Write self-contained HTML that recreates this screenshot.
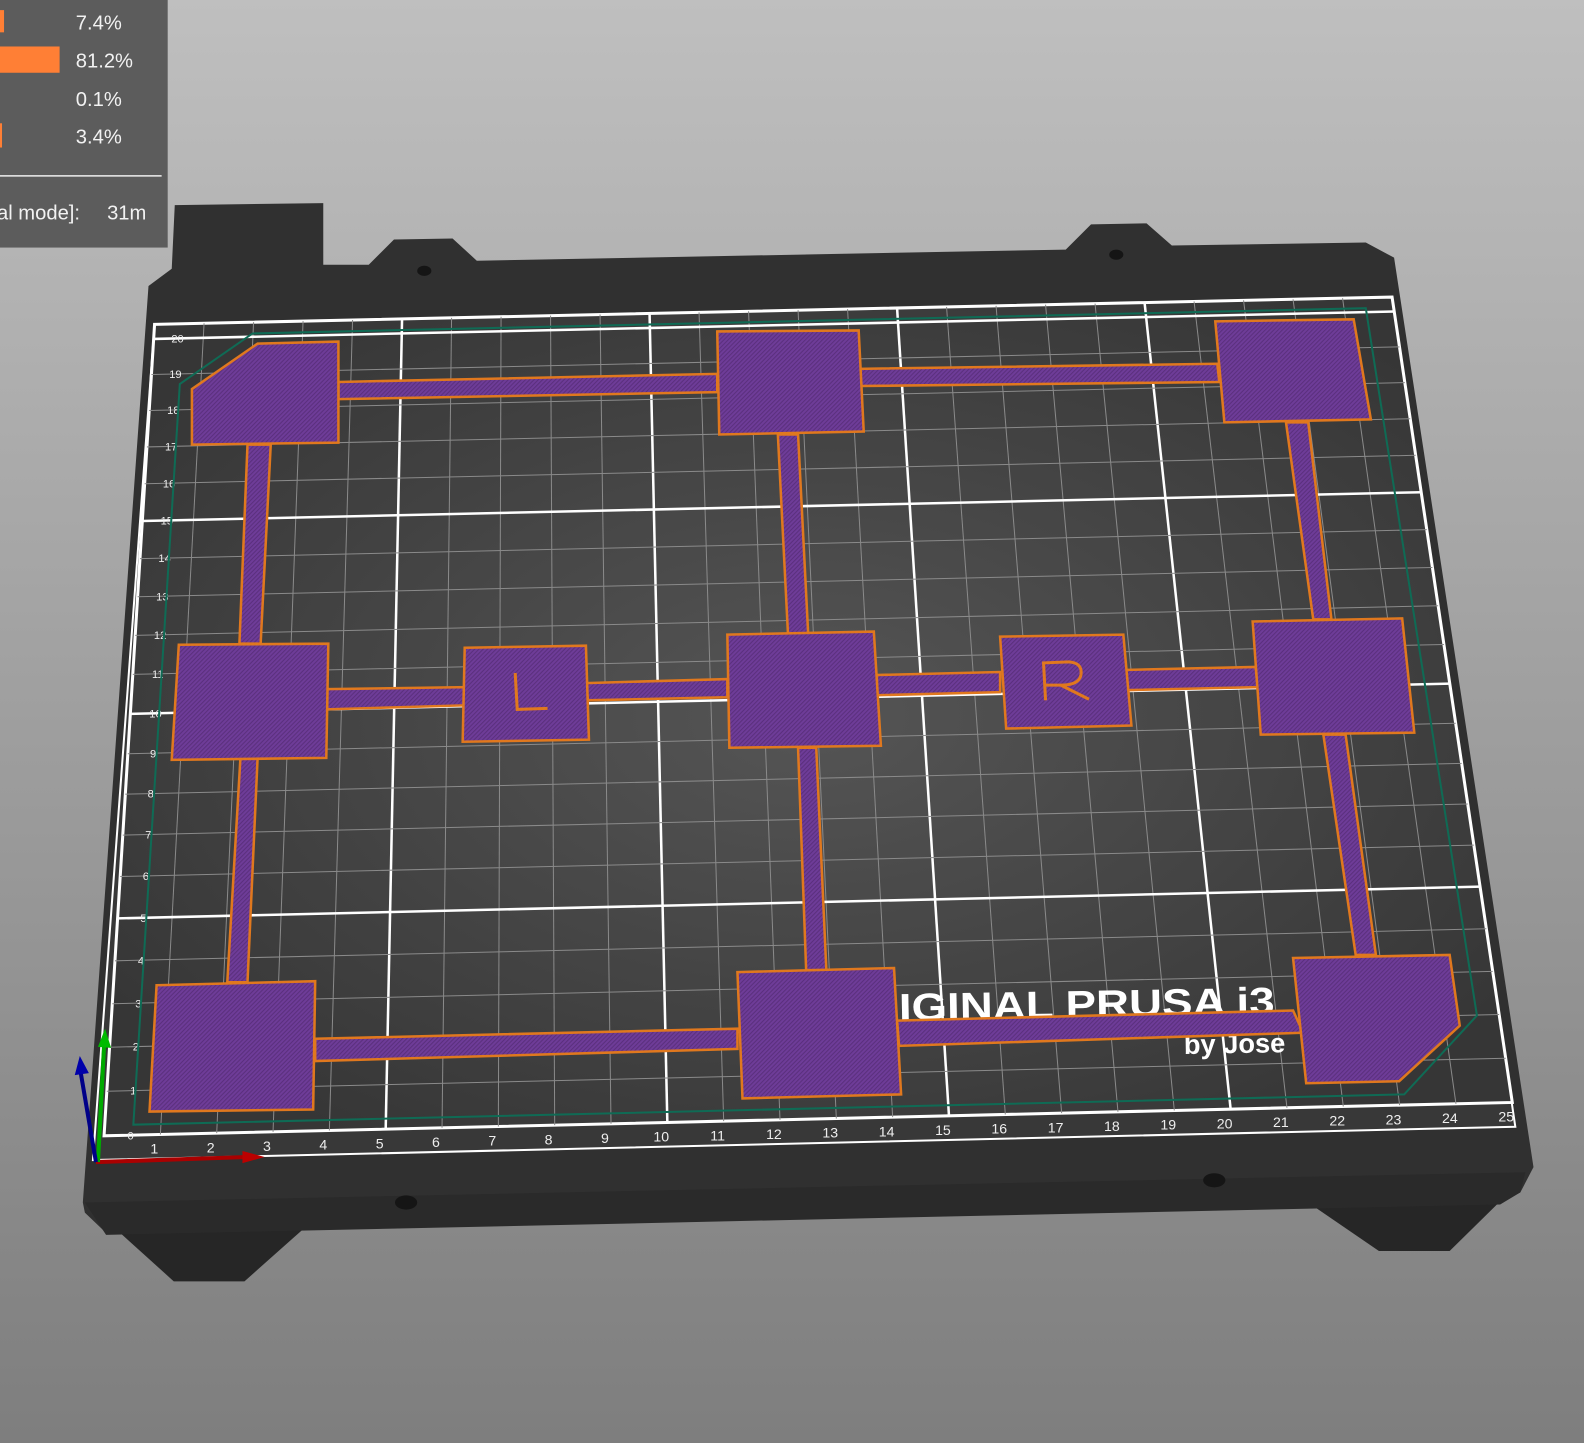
<!DOCTYPE html>
<html><head><meta charset="utf-8"><style>
html,body{margin:0;padding:0;width:1584px;height:1443px;overflow:hidden;background:#a0a0a0}
svg{display:block}
text{font-family:"Liberation Sans",sans-serif}
</style></head><body>
<svg id="s" width="1584" height="1443" viewBox="0 0 1568 1428" preserveAspectRatio="none" xmlns="http://www.w3.org/2000/svg">
<defs>
<linearGradient id="bg" x1="0" y1="0" x2="0" y2="1"><stop offset="0" stop-color="#bfbfbf"/><stop offset="1" stop-color="#7e7e7e"/></linearGradient>
<radialGradient id="pl" cx="0.5" cy="0.5" r="0.6"><stop offset="0" stop-color="#555"/><stop offset="1" stop-color="#363636"/></radialGradient>
<pattern id="hatch" width="3" height="3" patternUnits="userSpaceOnUse" patternTransform="rotate(45)"><rect width="3" height="3" fill="#6e3c98"/><rect width="1" height="3" fill="#5a2f7c"/></pattern>
</defs>
<rect width="1568" height="1428" fill="url(#bg)"/>
<polygon points="110,1212 172,1268 242,1268 305,1212" fill="#262626"/>
<polygon points="1292,1188 1365,1238 1435,1238 1492,1182" fill="#262626"/>
<polygon points="147,283 170,266 173,203 320,201 320,262 365,262 390,237 448,236 472,258 1055,247 1080,222 1135,221 1160,243 1352,240 1380,255 1518,1155 1505,1180 1485,1190 105,1220 84,1200 82,1190" fill="#303030"/>
<polygon points="84,1190 1510,1160 1505,1180 1485,1192 105,1222" fill="#2a2a2a"/>
<ellipse cx="420" cy="268" rx="7" ry="5" fill="#151515"/>
<ellipse cx="1105" cy="252" rx="7" ry="5" fill="#151515"/>
<ellipse cx="402" cy="1190" rx="11" ry="7" fill="#151515"/>
<ellipse cx="1202" cy="1168" rx="11" ry="7" fill="#151515"/>
<polygon points="153,321 1378,294 1500,1115 92,1148" fill="#383838" stroke="#fff" stroke-width="2"/>
<polygon points="153,321 1378,294 1497,1091 103,1124" fill="url(#pl)" stroke="#fff" stroke-width="3"/>
<g id="grid"></g>
<g id="labels" fill="#eee" font-size="13"></g>
<text x="890" y="1010" fill="#fff" font-size="38" font-weight="bold" textLength="372" lengthAdjust="spacingAndGlyphs" transform="rotate(-1 890 1010)">IGINAL PRUSA i3</text>
<text x="1172" y="1043" fill="#fff" font-size="27" font-weight="bold" transform="rotate(-1 1172 1043)">by Jose</text>
<polygon points="250,330 1352,305 1462,1005 1390,1083 132,1113 178,380" fill="none" stroke="#0f6b55" stroke-width="2"/>
<g fill="url(#hatch)" stroke="#e0781e" stroke-width="2.5">
<polygon points="335,378 710,370 710,388 335,395"/>
<polygon points="850,365 1205,360 1207,378 852,382"/>
<polygon points="245,440 268,440 258,637 237,637"/>
<polygon points="238,750 255,750 245,972 225,972"/>
<polygon points="770,430 790,430 800,627 780,627"/>
<polygon points="790,740 808,740 818,960 798,960"/>
<polygon points="1273,418 1295,418 1318,613 1300,613"/>
<polygon points="1310,727 1332,727 1362,945 1342,945"/>
<polygon points="323,682 460,680 460,698 323,702"/>
<polygon points="580,676 720,672 720,690 582,693"/>
<polygon points="868,668 990,665 990,685 868,688"/>
<polygon points="1112,663 1243,660 1245,680 1115,683"/>
<polygon points="312,1028 730,1018 730,1038 312,1050"/>
<polygon points="888,1010 1280,1000 1290,1022 890,1035"/>
<polygon points="190,385 255,340 335,338 335,438 190,440"/>
<polygon points="710,328 850,327 855,427 712,430"/>
<polygon points="1203,318 1340,316 1357,415 1212,418"/>
<polygon points="177,638 325,637 323,750 170,752"/>
<polygon points="460,641 580,639 583,732 458,734"/>
<polygon points="720,628 865,625 872,738 722,740"/>
<polygon points="990,630 1112,628 1120,718 996,721"/>
<polygon points="1240,615 1388,612 1400,725 1248,727"/>
<polygon points="155,975 312,971 310,1098 148,1100"/>
<polygon points="730,962 885,958 892,1083 735,1087"/>
<polygon points="1280,948 1435,945 1445,1015 1385,1070 1293,1072"/>
</g>
<g fill="none" stroke="#e0781e" stroke-width="3">
<polyline points="510,666 512,702 542,701"/>
<path d="M1035,693 L1033,656 L1058,655 Q1072,656 1070,668 Q1068,678 1050,678 L1035,678 M1050,678 L1078,692"/>
</g>
<line x1="95" y1="1150" x2="245" y2="1145" stroke="#a00" stroke-width="4"/>
<polygon points="240,1139 262,1145 240,1151" fill="#b00"/>
<line x1="97" y1="1150" x2="103" y2="1035" stroke="#0a0" stroke-width="4"/>
<polygon points="97,1036 104,1018 110,1037" fill="#0b0"/>
<line x1="95" y1="1150" x2="80" y2="1062" stroke="#008" stroke-width="4"/>
<polygon points="74,1064 79,1045 88,1062" fill="#00a"/>
<rect x="0" y="0" width="166" height="245" fill="#5c5c5c"/>
<rect x="0" y="10" width="4" height="22" fill="#ff7f35"/>
<rect x="0" y="46" width="59" height="26" fill="#ff7f35"/>
<rect x="0" y="122" width="2" height="24" fill="#ff7f35"/>
<g fill="#f2f2f2" font-size="20">
<text x="75" y="29">7.4%</text><text x="75" y="67">81.2%</text><text x="75" y="105">0.1%</text><text x="75" y="142">3.4%</text>
<text x="-3" y="217">al mode]:</text><text x="106" y="217">31m</text>
</g>
<line x1="0" y1="174" x2="160" y2="174" stroke="#eee" stroke-width="1.5"/>
</svg>
<script>
var P00=[103,1124],P10=[1497,1091],P01=[153,321],P11=[1378,294];
var A=0.05527,B=0.00628;
function m(u,v){u/=25;var t=A*v/(1+B*v);var x=(1-u)*(1-t)*P00[0]+u*(1-t)*P10[0]+(1-u)*t*P01[0]+u*t*P11[0];var y=(1-u)*(1-t)*P00[1]+u*(1-t)*P10[1]+(1-u)*t*P01[1]+u*t*P11[1];return [x,y];}
var VT=1/(A-B);
var g=document.getElementById('grid'),L=document.getElementById('labels'),ns='http://www.w3.org/2000/svg';
function ln(a,b,w,c){var e=document.createElementNS(ns,'line');e.setAttribute('x1',a[0]);e.setAttribute('y1',a[1]);e.setAttribute('x2',b[0]);e.setAttribute('y2',b[1]);e.setAttribute('stroke',c);e.setAttribute('stroke-width',w);g.appendChild(e);}
for(var i=1;i<25;i++){ln(m(i,0),m(i,VT),i%5?1:2.5,i%5?'#8a8a8a':'#fff');}
for(var j=1;j<=20;j++){ln(m(0,j),m(25,j),j%5?1:2.5,j%5?'#8a8a8a':'#fff');}
function tx(p,s,sz){var e=document.createElementNS(ns,'text');e.setAttribute('x',p[0]);e.setAttribute('y',p[1]);e.setAttribute('text-anchor','middle');e.setAttribute('font-size',sz);e.textContent=s;L.appendChild(e);}
for(var i=1;i<=25;i++){var p=m(i,0);tx([p[0]-6,p[1]+19],i,14);}
for(var j=0;j<=20;j++){var p=m(0.4,j);tx([p[0]+4,p[1]+4],j,11);}
</script>
</body></html>
